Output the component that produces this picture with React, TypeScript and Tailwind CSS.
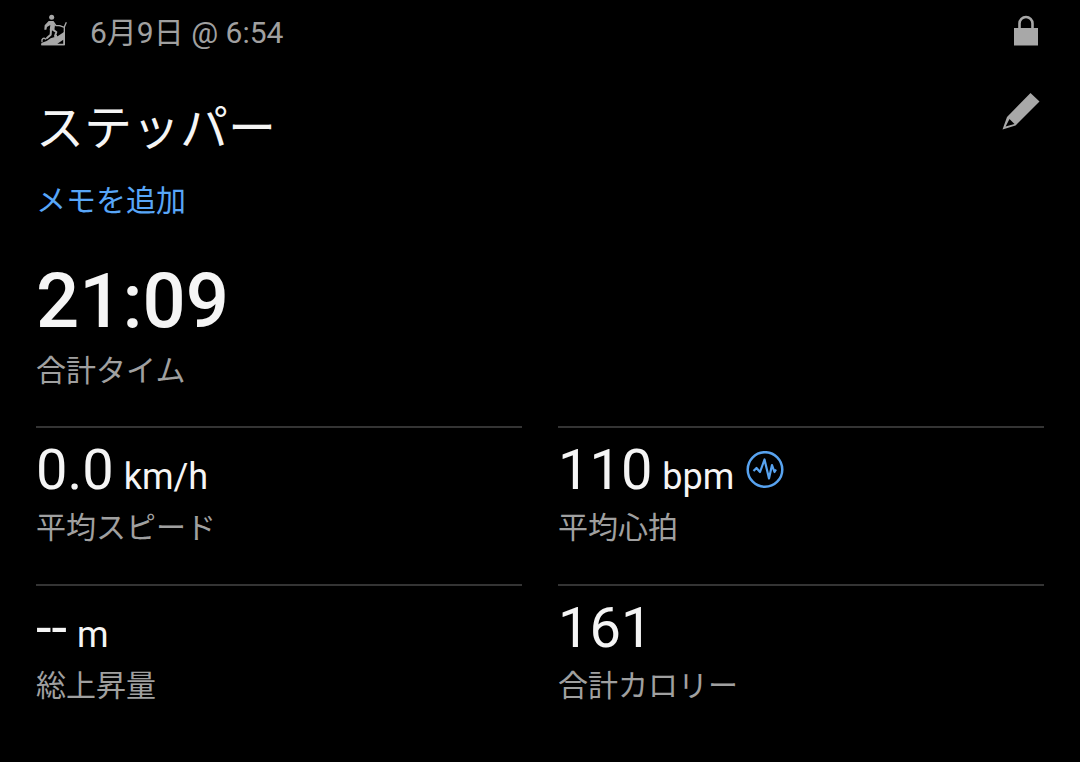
import type { ReactNode } from "react";

function StepperIcon() {
  return (
    <svg viewBox="18 33 96 102" className="h-[34px] w-8 overflow-visible" fill="none" stroke="#a8a8a8" aria-hidden="true">
      <circle cx="65" cy="37" r="7.500" fill="#a8a8a8" stroke="none" />
      <path d="M56 48H70L75 61 73 76H59L61 60 51 66 49 74H43L44 61Z" fill="#a8a8a8" stroke="none" />
      <path d="M70 51 78 62H89" strokeWidth="4" strokeLinecap="round" strokeLinejoin="round" />
      <path d="M68 74 79 81 75 93H81" strokeWidth="6" strokeLinejoin="round" />
      <path d="M63 74 62 89 51 99" strokeWidth="6" strokeLinecap="round" strokeLinejoin="round" />
      <path d="M34 121V114L50 108 62 100 84 93 103 80V121Z" fill="#a8a8a8" stroke="none" />
      <path d="M82 116 100 104V116Z" fill="#000000" stroke="none" />
      <path d="M36 110C34 101 41 97 47 102" strokeWidth="4" strokeLinecap="round" />
      <path d="M34 119H103V66L109 52M89 62 103 67" strokeWidth="4" />
    </svg>
  );
}

function LockIcon() {
  return (
    <svg viewBox="0 0 24 32" className="h-8 w-6 overflow-visible" aria-hidden="true">
      <path d="M5.500 12V6.500a6.500 6.500 0 0 1 13 0V12" fill="none" stroke="#a8a8a8" strokeWidth="2.600" />
      <path d="M0 11H24V28.500H0Z" fill="#a8a8a8" />
    </svg>
  );
}

function PencilIcon() {
  return (
    <svg viewBox="0 0 38 38" className="size-[38px]" aria-hidden="true">
      <path
        fillRule="evenodd"
        fill="#a8a8a8"
        d="M28.500 0 37.500 8.500 13.500 32.500 0.500 36.500 5 24ZM7.500 26 3.600 33.500 12.500 31Z"
      />
    </svg>
  );
}

function PulseIcon() {
  return (
    <svg viewBox="0 0 38 38" className="size-[38px]" fill="none" stroke="#58a3f0" aria-hidden="true">
      <circle cx="19" cy="18.500" r="17.300" strokeWidth="2.500" />
      <path
        d="M7.500 20 10.500 17 14 21 18.500 8.500 23 27.500 26 14 28.500 21 30 18.500"
        strokeWidth="2.200"
        strokeLinejoin="round"
      />
    </svg>
  );
}

type StatProps = { value: string; unit?: string; label: string; children?: ReactNode };

function Stat({ value, unit, label, children }: StatProps) {
  return (
    <div className="flex flex-col border-t-2 border-[#343434] pt-2.5 pb-9">
      <dt className="order-2 text-[30px] leading-10 text-[#a0a0a0]">{label}</dt>
      <dd className="order-1 mb-1.5 flex h-16 items-center gap-3 text-[56px] leading-[64px]">
        <span>
          {value}
          {unit && <span className="ml-px text-[36px] leading-none"> {unit}</span>}
        </span>
        {children}
      </dd>
    </div>
  );
}

export default function App() {
  return (
    <main
      lang="ja"
      className="min-h-screen bg-black px-9 pt-[13px] font-['Roboto','Noto_Sans_CJK_JP',sans-serif] text-[#f5f5f5]"
    >
      <header className="flex h-10 items-center justify-between pr-1.5">
        <div className="flex items-center gap-[22px]">
          <StepperIcon />
          <time className="text-[30px] leading-10 text-[#a0a0a0]">6月9日 @ 6:54</time>
        </div>
        <span role="img" aria-label="非公開">
          <LockIcon />
        </span>
      </header>

      <div className="mt-10 flex items-start justify-between pr-1">
        <h1 className="text-[48px] leading-[72px]">ステッパー</h1>
        <button type="button" aria-label="編集">
          <PencilIcon />
        </button>
      </div>

      <a href="#memo" className="mt-4 block w-fit text-[30px] leading-10 text-[#58a6f8]">
        メモを追加
      </a>

      <dl>
        <div className="mt-10 flex flex-col">
          <dt className="order-2 mt-2.5 text-[30px] leading-10 text-[#a0a0a0]">合計タイム</dt>
          <dd className="order-1 text-[76px] leading-[80px] font-medium">21:09</dd>
        </div>
        <div className="mt-[35px] grid grid-cols-2 gap-x-9">
          <Stat value="0.0" unit="km/h" label="平均スピード" />
          <Stat value="110" unit="bpm" label="平均心拍">
            <button type="button" aria-label="心拍の詳細">
              <PulseIcon />
            </button>
          </Stat>
          <Stat value="--" unit="m" label="総上昇量" />
          <Stat value="161" label="合計カロリー" />
        </div>
      </dl>
    </main>
  );
}
